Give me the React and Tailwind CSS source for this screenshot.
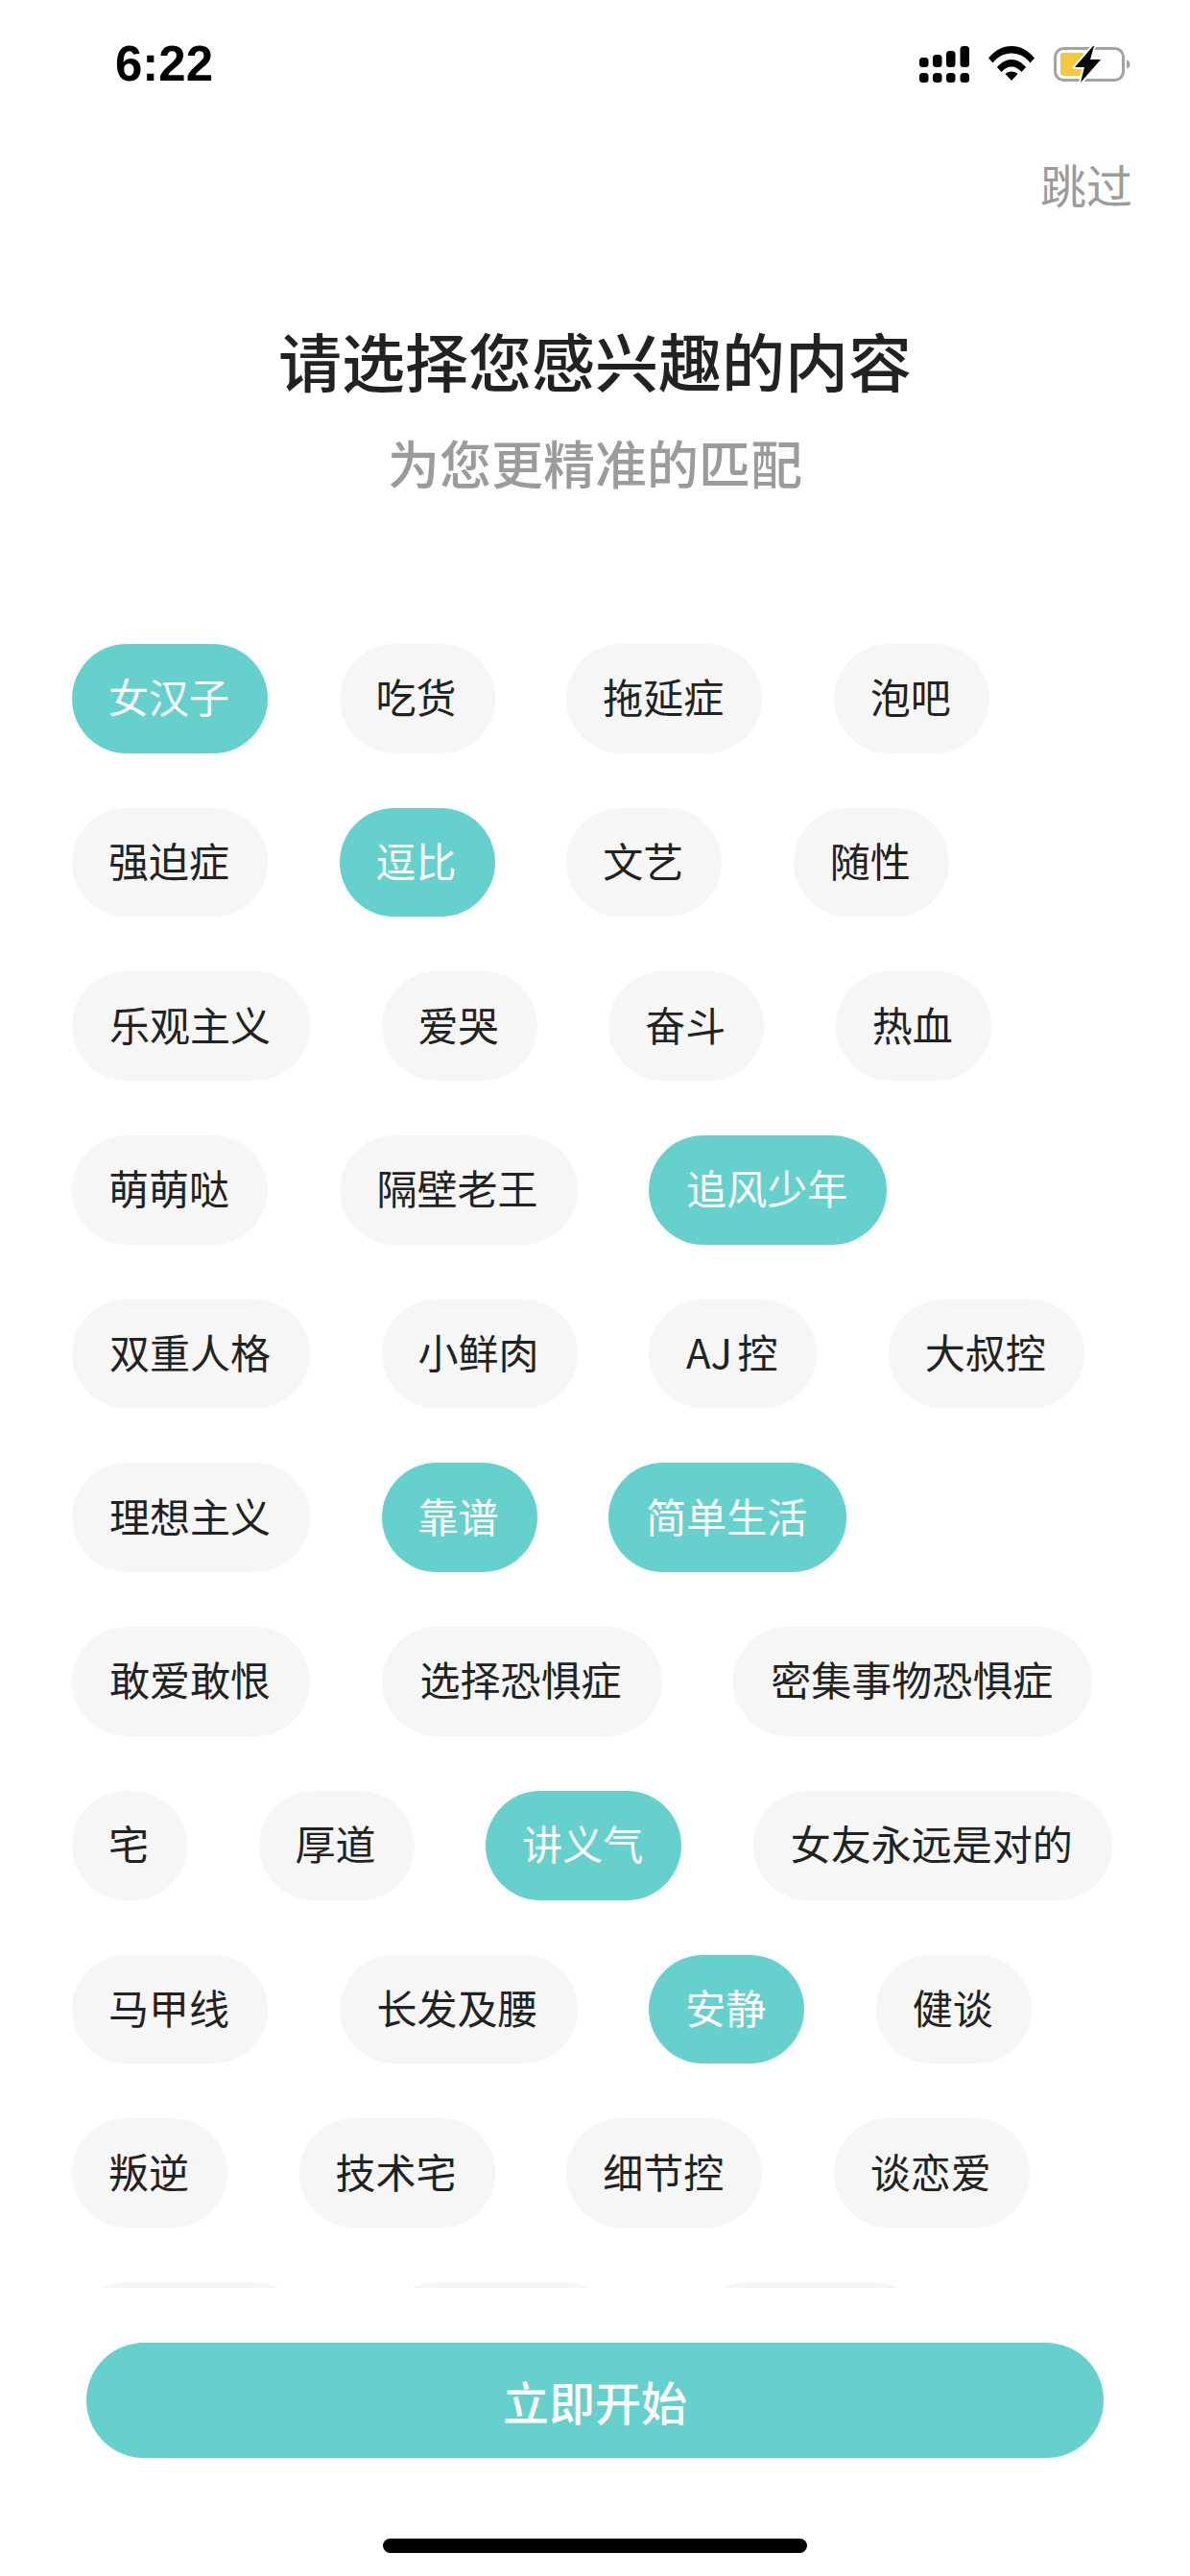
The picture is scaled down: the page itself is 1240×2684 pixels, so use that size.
import React from 'react';

const tags = [
    ['女汉子', true], ['吃货'], ['拖延症'], ['泡吧'],
    ['强迫症'], ['逗比', true], ['文艺'], ['随性'],
    ['乐观主义'], ['爱哭'], ['奋斗'], ['热血'],
    ['萌萌哒'], ['隔壁老王'], ['追风少年', true],
    ['双重人格'], ['小鲜肉'], ['AJ 控'], ['大叔控'],
    ['理想主义'], ['靠谱', true], ['简单生活', true],
    ['敢爱敢恨'], ['选择恐惧症'], ['密集事物恐惧症'],
    ['宅'], ['厚道'], ['讲义气', true], ['女友永远是对的'],
    ['马甲线'], ['长发及腰'], ['安静', true], ['健谈'],
    ['叛逆'], ['技术宅'], ['细节控'], ['谈恋爱'],
];

// measured widths of the chips that don't follow the plain padding
const chipWidth = (label) => {
    if (label === 'AJ 控') return 'w-[175px]';
    if (label.length === 4) return 'w-[248px]';
    if (label.length === 5) return 'w-[292px]';
    if (label.length === 7) return 'w-[374px]';
    if (label.length === 3) return 'w-[204px]';
    if (label.length === 2) return 'w-[162px]';
    return 'w-[120px]';
};

const SignalIcon = () => (
    <svg width="52" height="38" viewBox="0 0 52 38" fill="#000">
        <rect x="0" y="12" width="9.5" height="10" rx="3.5" />
        <rect x="14" y="9" width="9.5" height="13" rx="3.5" />
        <rect x="28" y="5" width="9.5" height="17" rx="3.5" />
        <rect x="42.5" y="0" width="9.5" height="22" rx="3.5" />
        <rect x="0" y="28" width="9.5" height="10" rx="3.5" />
        <rect x="14" y="28" width="9.5" height="10" rx="3.5" />
        <rect x="28" y="28" width="9.5" height="10" rx="3.5" />
        <rect x="42.5" y="28" width="9.5" height="10" rx="3.5" />
    </svg>
);

const WifiIcon = () => (
    <svg width="48" height="36" viewBox="0 0 48 36" fill="#000">
        <path d="M0 12.5C6.5 4.5 15 0 24 0s17.5 4.5 24 12.5l-4.500 5C38.500 11 31.500 7.500 24 7.500S9.500 11 4.500 17.500z" />
        <path d="M9 22C13 17 18.500 14 24 14s11 3 15 8l-4.500 5C31.500 23.500 28 21.500 24 21.500S16.500 23.500 13.500 27z" />
        <path d="M17.500 29C19 27.500 21.500 26.500 24 26.500S29 27.500 30.500 29L24 36z" />
    </svg>
);

const BatteryIcon = () => (
    <svg width="80" height="38" viewBox="0 0 80 38">
        <rect x="1.500" y="2.500" width="71" height="33" rx="9" fill="none" stroke="#a3a3a3" strokeWidth="3" />
        <rect x="7" y="7" width="26" height="24" rx="3" fill="#f5c842" />
        <path d="M76 14.500c2.500 1 3.500 2.500 3.500 4.500s-1 3.500-3.500 4.500z" fill="#a3a3a3" />
        <path d="M41 0L22 22H32L28 38L49 14H38L42 0z" fill="#000" stroke="#fff" strokeWidth="4" paintOrder="stroke" strokeLinejoin="round" />
    </svg>
);

const App = () => {
    return (
        <div className="w-[1240px] h-[2684px] bg-white flex flex-col overflow-hidden font-['Noto_Sans_CJK_SC','Noto_Sans',sans-serif]">
            <div className="h-[136px] pl-[120px] pr-[62px] pt-[48px] shrink-0 flex justify-between items-start">
                <span className="font-['Liberation_Sans',sans-serif] font-bold text-[51px] leading-[38px] text-black">6:22</span>
                <div className="flex items-start gap-[20px]">
                    <SignalIcon />
                    <WifiIcon />
                    <BatteryIcon />
                </div>
            </div>

            <div className="h-[116px] pt-[12px] pr-[60px] shrink-0 flex justify-end items-start">
                <span className="text-[48px] leading-[86px] text-[#9b9b9b]">跳过</span>
            </div>

            <h1 className="mt-[83px] text-center text-[66px] leading-[78px] font-medium text-[#222222]">请选择您感兴趣的内容</h1>
            <p className="mt-[30px] text-center text-[54px] leading-[78px] font-medium text-[#9b9b9b]">为您更精准的匹配</p>

            <div className="mt-[150px] h-[1713px] shrink-0 overflow-hidden px-[75px]">
                <div className="flex flex-wrap gap-x-[74.600px] gap-y-[57px] w-[1090px]">
                    {tags.map(([label, active]) => (
                        <div
                            key={label}
                            className={`h-[113.700px] pb-[6px] pr-[2px] rounded-full flex items-center justify-center text-[42px] whitespace-nowrap [word-spacing:-4px] ${chipWidth(label)} ${active ? 'bg-[#66d0cd] text-white' : 'bg-[#f6f6f6] text-[#222222]'}`}
                        >
                            {label}
                        </div>
                    ))}
                    {/* last row is scrolled under the button area, only the tops show */}
                    <div className="h-[113.700px] w-[248px] rounded-full bg-[#f6f6f6]"></div>
                    <div className="h-[113.700px] w-[248px] rounded-full bg-[#f6f6f6]"></div>
                    <div className="h-[113.700px] w-[248px] rounded-full bg-[#f6f6f6]"></div>
                </div>
            </div>

            <div className="mt-[57px] px-[90px] shrink-0">
                <button className="w-full h-[120px] rounded-full bg-[#66d0cd] text-white text-[48px] font-medium">立即开始</button>
            </div>

            <div className="mt-[84px] h-[15px] w-[442px] mx-auto rounded-full bg-black shrink-0"></div>
        </div>
    );
};

export default App;
